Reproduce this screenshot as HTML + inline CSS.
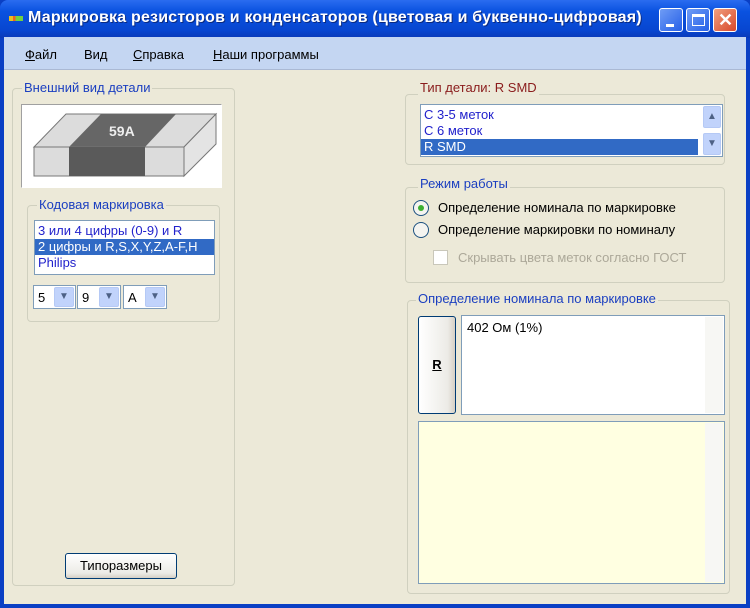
<!DOCTYPE html>
<html><head><meta charset="utf-8"><style>
*{box-sizing:border-box;margin:0;padding:0}
body{width:750px;height:608px;overflow:hidden;background:#0a3fc4;font-family:Tahoma,"Liberation Sans",sans-serif;font-size:13px;position:relative}
.abs{position:absolute}
#title{left:0;top:0;width:750px;height:38px;background:linear-gradient(#2a6cf0,#0a52e0 30%,#0846d0 80%,#0a3ab8);border-radius:8px 8px 0 0}
#tt{left:28px;top:9px;color:#fff;font-weight:bold;font-size:16px;letter-spacing:.2px;text-shadow:1px 1px #0a2a80;white-space:nowrap}
.tb{top:8px;width:24px;height:24px;border:1px solid #fff;border-radius:3px;background:linear-gradient(135deg,#6f9cf5,#2660e8)}
#menu{left:4px;top:37px;width:742px;height:33px;background:#c4d6f2;border-bottom:1px solid #aab9d4}
#menu span{position:absolute;top:10px;font-size:13px;color:#000}
#body{left:4px;top:70px;width:742px;height:534px;background:#ece9d8}
.grp{border:1px solid #d0d0bf;border-radius:4px}
.lg{background:#ece9d8;color:#1b3fc0;padding:0 2px;white-space:nowrap;font-size:13px}
.lb{background:#fff;border:1px solid #7f9db9}
.it{height:16px;line-height:16px;padding-left:3px;color:#2222cc;font-size:13px;white-space:nowrap}
.sel{background:#316ac5;color:#fff}
.sb{background:#c1d3fb;border:1px solid #b5c9f5;border-radius:2px;color:#4d6185;font-size:10px;text-align:center}
.cb{background:#fff;border:1px solid #7f9db9;height:24px}
</style></head><body>
<div id="title" class="abs"></div>
<div class="abs" style="left:9px;top:16px;width:14px;height:5px;background:linear-gradient(90deg,#e8c020 0 30%,#f06020 30% 45%,#70d040 45% 100%)"></div>
<div id="tt" class="abs">Маркировка резисторов и конденсаторов (цветовая и буквенно-цифровая)</div>
<div class="abs tb" style="left:659px"><div class="abs" style="left:6px;top:15px;width:8px;height:3px;background:#fff"></div></div>
<div class="abs tb" style="left:686px"><div class="abs" style="left:5px;top:5px;width:13px;height:12px;border:1px solid #fff;border-top-width:3px"></div></div>
<div class="abs tb" style="left:713px;background:linear-gradient(135deg,#f0a080,#d8482a)"><div class="abs" style="left:4px;top:0;color:#fff;font-weight:bold;font-size:18px;line-height:22px">✕</div></div>
<div id="menu" class="abs"><span style="left:21px"><u>Ф</u>айл</span><span style="left:80px">Вид</span><span style="left:129px"><u>С</u>правка</span><span style="left:209px"><u>Н</u>аши программы</span></div>
<div id="body" class="abs"></div>

<!-- left group -->
<div class="abs grp" style="left:12px;top:88px;width:223px;height:498px"></div>
<div class="abs lg" style="left:22px;top:80px">Внешний вид детали</div>
<div class="abs" style="left:21px;top:104px;width:201px;height:84px;background:#fff;border:1px solid #a0a0a0;border-right-color:#fff;border-bottom-color:#fff"></div>
<svg class="abs" style="left:21px;top:104px" width="201" height="84">
<polygon points="13,43 45,10 195,10 163,43" fill="#dcdcdc" stroke="#777"/>
<polygon points="48,43 80,10 155,10 124,43" fill="#666"/>
<rect x="13" y="43" width="150" height="29" fill="#dcdcdc" stroke="#777"/>
<rect x="48" y="43" width="76" height="29" fill="#5a5a5a"/>
<polygon points="163,43 195,10 195,40 163,72" fill="#e4e4e4" stroke="#777"/>
<text x="88" y="32" fill="#eee" font-family="Liberation Sans" font-weight="bold" font-size="14">59A</text>
</svg>
<div class="abs grp" style="left:27px;top:205px;width:193px;height:117px"></div>
<div class="abs lg" style="left:37px;top:197px">Кодовая маркировка</div>
<div class="abs lb" style="left:34px;top:220px;width:181px;height:55px;padding-top:2px">
<div class="it">3 или 4 цифры (0-9) и R</div><div class="it sel">2 цифры и R,S,X,Y,Z,A-F,H</div><div class="it">Philips</div></div>
<div class="abs cb" style="left:33px;top:285px;width:43px"><span class="abs" style="left:4px;top:4px">5</span><div class="abs sb" style="left:20px;top:1px;width:20px;height:20px;line-height:18px">▼</div></div>
<div class="abs cb" style="left:77px;top:285px;width:44px"><span class="abs" style="left:4px;top:4px">9</span><div class="abs sb" style="left:21px;top:1px;width:20px;height:20px;line-height:18px">▼</div></div>
<div class="abs cb" style="left:123px;top:285px;width:44px"><span class="abs" style="left:4px;top:4px">A</span><div class="abs sb" style="left:21px;top:1px;width:20px;height:20px;line-height:18px">▼</div></div>
<div class="abs" style="left:65px;top:553px;width:112px;height:26px;border:1px solid #003c74;border-radius:3px;background:linear-gradient(#fff,#ecebe6 80%,#d6d0c5);text-align:center;line-height:24px">Типоразмеры</div>

<!-- right top -->
<div class="abs grp" style="left:405px;top:94px;width:320px;height:71px"></div>
<div class="abs lg" style="left:418px;top:80px;color:#8a1c1c">Тип детали: R SMD</div>
<div class="abs lb" style="left:420px;top:104px;width:303px;height:53px;padding-top:2px">
<div class="it" style="width:277px">C 3-5 меток</div><div class="it" style="width:277px">C 6 меток</div><div class="it sel" style="width:277px">R SMD</div>
<div class="abs sb" style="right:1px;top:1px;width:18px;height:22px;line-height:20px">▲</div>
<div class="abs sb" style="right:1px;top:28px;width:18px;height:22px;line-height:20px">▼</div></div>
<div class="abs grp" style="left:405px;top:187px;width:320px;height:96px"></div>
<div class="abs lg" style="left:418px;top:176px">Режим работы</div>
<div class="abs" style="left:413px;top:200px;width:16px;height:16px;border-radius:50%;border:1px solid #1c5180;background:#f4f4f0"><div class="abs" style="left:4px;top:4px;width:6px;height:6px;border-radius:50%;background:#3cb030"></div></div>
<div class="abs" style="left:438px;top:200px">Определение номинала по маркировке</div>
<div class="abs" style="left:413px;top:222px;width:16px;height:16px;border-radius:50%;border:1px solid #1c5180;background:#f4f4f0"></div>
<div class="abs" style="left:438px;top:222px">Определение маркировки по номиналу</div>
<div class="abs" style="left:433px;top:250px;width:15px;height:15px;border:1px solid #c9c7ba;background:#fff"></div>
<div class="abs" style="left:458px;top:250px;color:#aca899">Скрывать цвета меток согласно ГОСТ</div>

<!-- right bottom -->
<div class="abs grp" style="left:407px;top:300px;width:323px;height:294px"></div>
<div class="abs lg" style="left:416px;top:291px">Определение номинала по маркировке</div>
<div class="abs" style="left:418px;top:316px;width:38px;height:98px;border:1px solid #003c74;border-radius:3px;background:linear-gradient(90deg,#fff,#ecebe6 80%,#d6d0c5);text-align:center;line-height:96px;font-weight:bold"><u>R</u></div>
<div class="abs" style="left:461px;top:315px;width:264px;height:100px;background:#fff;border:1px solid #7f9db9"><span class="abs" style="left:5px;top:4px">402 Ом (1%)</span>
<div class="abs" style="right:1px;top:1px;width:18px;height:96px;background:#f7f7f4"></div></div>
<div class="abs" style="left:418px;top:421px;width:307px;height:163px;background:#ffffe1;border:1px solid #7f9db9">
<div class="abs" style="right:1px;top:1px;width:18px;height:159px;background:#f7f7f4"></div></div>
</body></html>
